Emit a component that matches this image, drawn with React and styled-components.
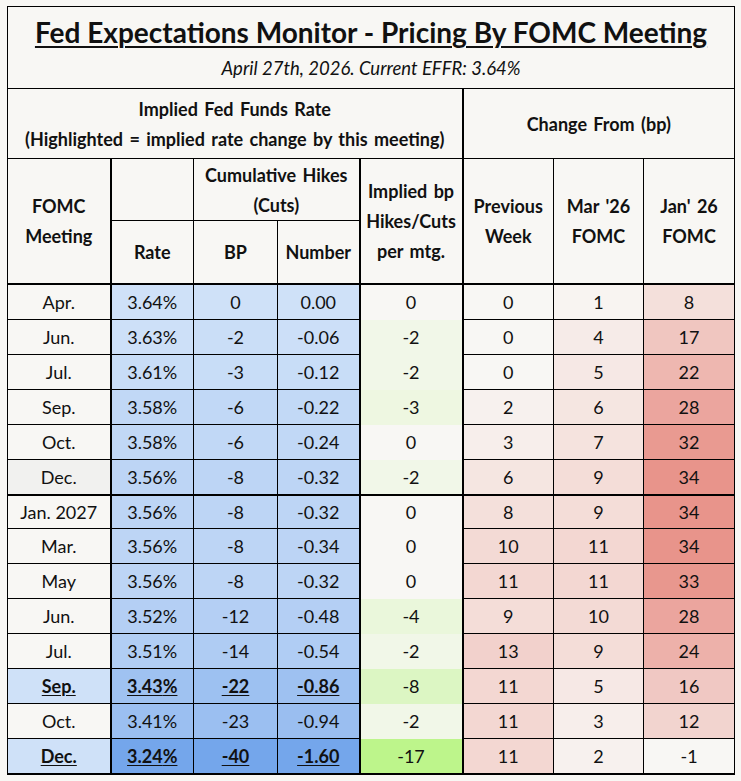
import React from 'react';
import styled, { createGlobalStyle } from 'styled-components';

const GlobalStyle = createGlobalStyle`
  body {
    margin: 0;
    background: #f8f7f4;
    font-family: Lato, "Open Sans", sans-serif;
    color: #111;
  }
`;

const Page = styled.div`
  padding: 6px 0 0 7px;
`;

const Table = styled.table`
  border-collapse: collapse;
  table-layout: fixed;
  width: 727px;
  border-top: 1px solid #000;
  border-left: 1px solid #000;
  border-right: 1px solid #000;
  border-bottom: 2px solid #000;
`;

const TitleCell = styled.td`
  height: 82px;
  padding: 8px 0 0;
  box-sizing: border-box;
  text-align: center;
  vertical-align: top;
  border-bottom: 1px solid #000;
`;

const Title = styled.div`
  font-size: 28px;
  font-weight: 700;
  text-decoration: underline;
  text-decoration-thickness: 2px;
  text-underline-offset: 3px;
  line-height: 34px;
`;

const Subtitle = styled.div`
  font-size: 18.5px;
  font-style: italic;
  line-height: 24px;
  margin-top: 7px;
`;

const Head = styled.th`
  height: ${p => p.$h || 'auto'};
  padding: 0;
  text-align: center;
  vertical-align: middle;
  font-size: 18px;
  font-weight: 700;
  line-height: 30px;
  word-spacing: 2px;
  border: 1px solid #000;
  border-left-width: ${p => (p.$thickLeft ? '2px' : '1px')};
  border-bottom-width: ${p => (p.$thickBottom ? '2px' : '1px')};
`;

const Cell = styled.td`
  height: ${p => (p.$thickTop ? 32 : 34)}px;
  padding: 0;
  text-align: center;
  vertical-align: middle;
  font-size: 18px;
  background: ${p => p.$bg || 'transparent'};
  border-left: ${p => (p.$thickLeft ? 2 : 1)}px solid #000;
  border-top: ${p => (p.$thickTop ? '2px solid #000' : p.$open ? 'none' : '1px solid #000')};
  font-weight: ${p => (p.$em ? 700 : 400)};
  text-decoration: ${p => (p.$em ? 'underline' : 'none')};
  text-underline-offset: 2px;
`;

const rows = [
  ['Apr.', 3.64, 0, '0.00', 0, 0, 1, 8],
  ['Jun.', 3.63, -2, '-0.06', -2, 0, 4, 17],
  ['Jul.', 3.61, -3, '-0.12', -2, 0, 5, 22],
  ['Sep.', 3.58, -6, '-0.22', -3, 2, 6, 28],
  ['Oct.', 3.58, -6, '-0.24', 0, 3, 7, 32],
  ['Dec.', 3.56, -8, '-0.32', -2, 6, 9, 34],
  ['Jan. 2027', 3.56, -8, '-0.32', 0, 8, 9, 34],
  ['Mar.', 3.56, -8, '-0.34', 0, 10, 11, 34],
  ['May', 3.56, -8, '-0.32', 0, 11, 11, 33],
  ['Jun.', 3.52, -12, '-0.48', -4, 9, 10, 28],
  ['Jul.', 3.51, -14, '-0.54', -2, 13, 9, 24],
  ['Sep.', 3.43, -22, '-0.86', -8, 11, 5, 16],
  ['Oct.', 3.41, -23, '-0.94', -2, 11, 3, 12],
  ['Dec.', 3.24, -40, '-1.60', -17, 11, 2, -1],
];

// rows whose rate change is highlighted
const highlighted = [11, 13];
const BG = [248, 247, 244];

const mix = (a, b, t) => {
  const k = Math.max(0, Math.min(1, t));
  const c = a.map((v, i) => Math.round(v + (b[i] - v) * k));
  return `rgb(${c.join(',')})`;
};

const blue = t => mix([207, 225, 248], [116, 166, 235], t);
const green = v => mix(BG, [189, 245, 139], v / -17);
const red = v => mix(BG, [232, 148, 139], v / 34);

export default function App() {
  return (
    <Page>
      <GlobalStyle />
      <Table>
        <colgroup>
          <col style={{ width: 103 }} />
          <col style={{ width: 83 }} />
          <col style={{ width: 84 }} />
          <col style={{ width: 82 }} />
          <col style={{ width: 103 }} />
          <col style={{ width: 91 }} />
          <col style={{ width: 90 }} />
          <col style={{ width: 91 }} />
        </colgroup>
        <tbody>
          <tr>
            <TitleCell colSpan={8}>
              <Title>Fed Expectations Monitor - Pricing By FOMC Meeting</Title>
              <Subtitle>April 27th, 2026. Current EFFR: 3.64%</Subtitle>
            </TitleCell>
          </tr>
          <tr>
            <Head colSpan={5} $h="69px">
              Implied Fed Funds Rate
              <br />
              (Highlighted = implied rate change by this meeting)
            </Head>
            <Head colSpan={3} $thickLeft>Change From (bp)</Head>
          </tr>
          <tr>
            <Head rowSpan={2} $thickBottom>FOMC<br />Meeting</Head>
            <Head $thickLeft $h="61px"></Head>
            <Head colSpan={2}>Cumulative Hikes<br />(Cuts)</Head>
            <Head rowSpan={2} $thickLeft $thickBottom>Implied bp<br />Hikes/Cuts<br />per mtg.</Head>
            <Head rowSpan={2} $thickLeft $thickBottom>Previous<br />Week</Head>
            <Head rowSpan={2} $thickBottom>Mar '26<br />FOMC</Head>
            <Head rowSpan={2} $thickBottom>Jan' 26<br />FOMC</Head>
          </tr>
          <tr>
            <Head $thickLeft $thickBottom $h="62px">Rate</Head>
            <Head $thickBottom>BP</Head>
            <Head $thickBottom>Number</Head>
          </tr>
          {rows.map((r, i) => {
            const [label, rate, bp, num, step, prev, mar, jan] = r;
            const em = highlighted.includes(i);
            const t = (3.64 - rate) / 0.4;
            const split = i === 6;
            const labelBg = em ? blue(0) : i === 5 ? '#f1f1ef' : undefined;
            return (
              <tr key={i}>
                <Cell $bg={labelBg} $em={em} $thickTop={split}>{label}</Cell>
                <Cell $bg={blue(t)} $em={em} $thickLeft $thickTop={split}>{rate.toFixed(2)}%</Cell>
                <Cell $bg={blue(bp / -40)} $em={em} $thickTop={split}>{bp}</Cell>
                <Cell $bg={blue(parseFloat(num) / -1.6)} $em={em} $thickTop={split}>{num}</Cell>
                <Cell $bg={green(step)} $thickLeft $open $thickTop={split}>{step}</Cell>
                <Cell $bg={red(prev)} $thickLeft $thickTop={split}>{prev}</Cell>
                <Cell $bg={red(mar)} $thickTop={split}>{mar}</Cell>
                <Cell $bg={red(jan)} $thickTop={split}>{jan}</Cell>
              </tr>
            );
          })}
        </tbody>
      </Table>
    </Page>
  );
}
